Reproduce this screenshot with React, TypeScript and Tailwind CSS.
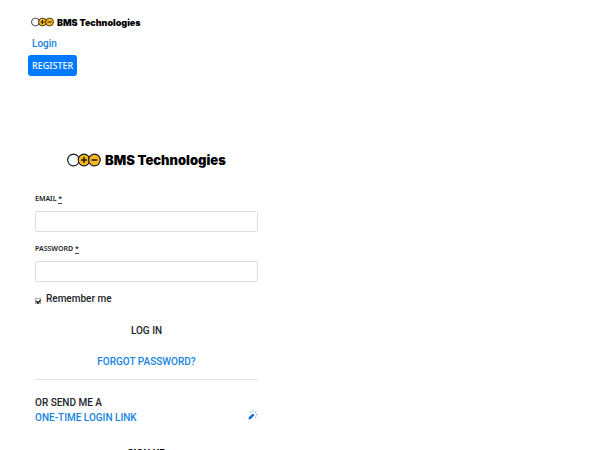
import type { ReactNode } from "react";
import { useState } from "react";

function Battery({ className }: { className: string }) {
  return (
    <svg viewBox="0 0 34 14" className={className} aria-hidden="true">
      <g stroke="#1c1c1c" strokeWidth="1.2">
        <circle cx="6.5" cy="7" r="5.8" fill="#fff" />
        <circle cx="17" cy="7" r="5.8" fill="#fbb91c" />
        <circle cx="27.4" cy="7" r="5.8" fill="#fbb91c" />
        <path d="M14 7h6M17 4v6M24.4 7h6" fill="none" strokeWidth="1.5" />
      </g>
    </svg>
  );
}

function Wand() {
  return (
    <svg viewBox="0 0 10 10" className="size-[10px]" aria-hidden="true">
      <path d="M1.8 8.2 4.8 5.2" stroke="#1769e0" strokeWidth="2.6" strokeLinecap="round" />
      <g fill="#7db8ec">
        <rect x="2" y="1.5" width="1.3" height="1.3" />
        <rect x="4.5" y="0.5" width="1.3" height="1.3" />
        <rect x="7" y="1.5" width="1.3" height="1.3" />
        <rect x="8.2" y="4" width="1.3" height="1.3" />
        <rect x="7" y="6.6" width="1.3" height="1.3" />
      </g>
    </svg>
  );
}

function Field({ id, type, children }: { id: string; type: string; children: ReactNode }) {
  return (
    <div className="mb-3">
      <label htmlFor={id} className="mb-2 block font-['Noto_Sans',sans-serif] text-[7px] leading-[9px] font-semibold uppercase">
        {children} <abbr title="required" className="border-b border-[#444] no-underline">*</abbr>
      </label>
      <input id={id} type={type} className="block h-[21px] w-full rounded-xs border border-[#dcdfe2] bg-white px-2 text-[10px]" />
    </div>
  );
}

export default function App() {
  const [remember, setRemember] = useState(true);
  return (
    <div className="h-screen overflow-hidden bg-white font-['Roboto','Liberation_Sans',sans-serif] text-[10px] leading-[15px] font-medium text-[#212529]">
      <header className="flex flex-col items-start px-7 pt-4">
        <a href="#home" className="ml-[3px] flex h-3 items-center gap-[3px] font-['Inter',sans-serif] text-[9px] font-black text-black">
          <Battery className="h-[10px] w-[23px]" />
          BMS Technologies
        </a>
        <a href="#login" className="mt-2 ml-1 text-[#1683df]">Login</a>
        <button type="button" className="mt-1 h-[21px] rounded-[3px] bg-[#007bff] px-1 font-['Noto_Sans',sans-serif] text-[9px] text-white">REGISTER</button>
      </header>
      <main className="mt-[76px] ml-[35px] w-[223px] max-w-full">
        <div className="mb-[26px] flex h-4 items-center justify-center gap-1 font-['Inter',sans-serif] text-[13px] font-black text-black">
          <Battery className="h-[14px] w-[34px]" />
          BMS Technologies
        </div>
        <form onSubmit={(e) => e.preventDefault()}>
          <Field id="email" type="email">Email</Field>
          <Field id="password" type="password">Password</Field>
          <label className="-mt-[3px] flex items-center gap-[5px]">
            <span className="mt-1 grid size-[6px]">
              <input
                type="checkbox"
                checked={remember}
                onChange={(e) => setRemember(e.target.checked)}
                className="peer col-start-1 row-start-1 size-[6px] appearance-none border border-[#aaa]"
              />
              <svg viewBox="0 0 6 6" className="pointer-events-none invisible col-start-1 row-start-1 size-[6px] peer-checked:visible" aria-hidden="true">
                <path d="m1.2 3 1.8 2L5.6 2" fill="none" stroke="#111" strokeWidth="1.4" />
              </svg>
            </span>
            Remember me
          </label>
          <button type="submit" className="mt-[17px] block h-[15px] w-full">LOG IN</button>
        </form>
        <a href="#forgot" className="mt-4 block text-center text-[#1683df]">FORGOT PASSWORD?</a>
        <hr className="mt-[10px] mb-[15px] border-[#e3e3e3]" />
        <p>OR SEND ME A</p>
        <a href="#link" className="flex items-start justify-between text-[#1683df]">
          ONE-TIME LOGIN LINK
          <Wand />
        </a>
        <h2 className="mt-[21px] text-center font-bold text-black">SIGN UP</h2>
      </main>
    </div>
  );
}
